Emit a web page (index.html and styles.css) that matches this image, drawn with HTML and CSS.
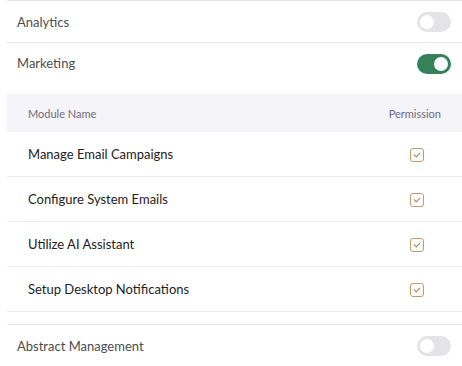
FILE: index.html
```html
<!DOCTYPE html>
<html lang="en">
<head>
  <meta charset="UTF-8">
  <title>Module Permissions</title>
  <link rel="stylesheet" href="styles.css">
</head>
<body>
  <div class="panel">
    <div class="section">
      <span class="section-name">Analytics</span>
      <span class="toggle"></span>
    </div>

    <div class="section section-open">
      <span class="section-name">Marketing</span>
      <span class="toggle on"></span>
    </div>

    <table class="modules">
      <thead>
        <tr>
          <th>Module Name</th>
          <th class="perm">Permission</th>
        </tr>
      </thead>
      <tbody>
        <tr>
          <td>Manage Email Campaigns</td>
          <td class="perm"><span class="check"></span></td>
        </tr>
        <tr>
          <td>Configure System Emails</td>
          <td class="perm"><span class="check"></span></td>
        </tr>
        <tr>
          <td>Utilize AI Assistant</td>
          <td class="perm"><span class="check"></span></td>
        </tr>
        <tr>
          <td>Setup Desktop Notifications</td>
          <td class="perm"><span class="check"></span></td>
        </tr>
      </tbody>
    </table>

    <div class="section">
      <span class="section-name">Abstract Management</span>
      <span class="toggle"></span>
    </div>
  </div>
</body>
</html>
```

FILE: styles.css
```css
body {
  margin: 0;
  background: #fff;
  font-family: 'Lato', 'Open Sans', sans-serif;
}

.panel {
  padding-left: 7px;
}

.section {
  display: flex;
  align-items: center;
  justify-content: space-between;
  height: 41px;
  padding: 0 11px 0 10px;
  border-top: 1px solid #e6e6ea;
}

.section-open {
  height: 51px;
  align-items: flex-start;
}

.section-open .toggle {
  margin-top: 11px;
}

.section-open .section-name {
  margin-top: 12px;
}

.section-name {
  font-size: 13px;
  color: #4d4d4d;
}

.toggle {
  position: relative;
  width: 34px;
  height: 20px;
  border-radius: 10px;
  background: #e3e3e8;
}

.toggle::after {
  content: '';
  position: absolute;
  left: 3px;
  top: 3px;
  width: 14px;
  height: 14px;
  border-radius: 50%;
  background: #fff;
}

.toggle.on {
  background: #35825a;
}

.toggle.on::after {
  left: 17px;
}

.modules {
  width: 100%;
  border-collapse: collapse;
  margin-bottom: 12px;
}

.modules th {
  height: 38px;
  padding: 0 21px;
  background: #f5f4f9;
  font-size: 11px;
  font-weight: 400;
  color: #6f6b80;
  text-align: left;
}

.modules td {
  height: 44px;
  padding: 0 21px;
  font-size: 13px;
  color: #222;
  border-bottom: 1px solid #ececf0;
}

.modules .perm {
  text-align: right;
  width: 60px;
}

.modules td.perm {
  padding-right: 38px;
}

.check {
  display: inline-block;
  position: relative;
  width: 12px;
  height: 12px;
  border: 1px solid #c49a6c;
  border-radius: 3px;
  vertical-align: middle;
}

.check::after {
  content: '';
  position: absolute;
  left: 4px;
  top: 2px;
  width: 3px;
  height: 5px;
  border: solid #a8835a;
  border-width: 0 1px 1px 0;
  transform: rotate(45deg);
}
```
